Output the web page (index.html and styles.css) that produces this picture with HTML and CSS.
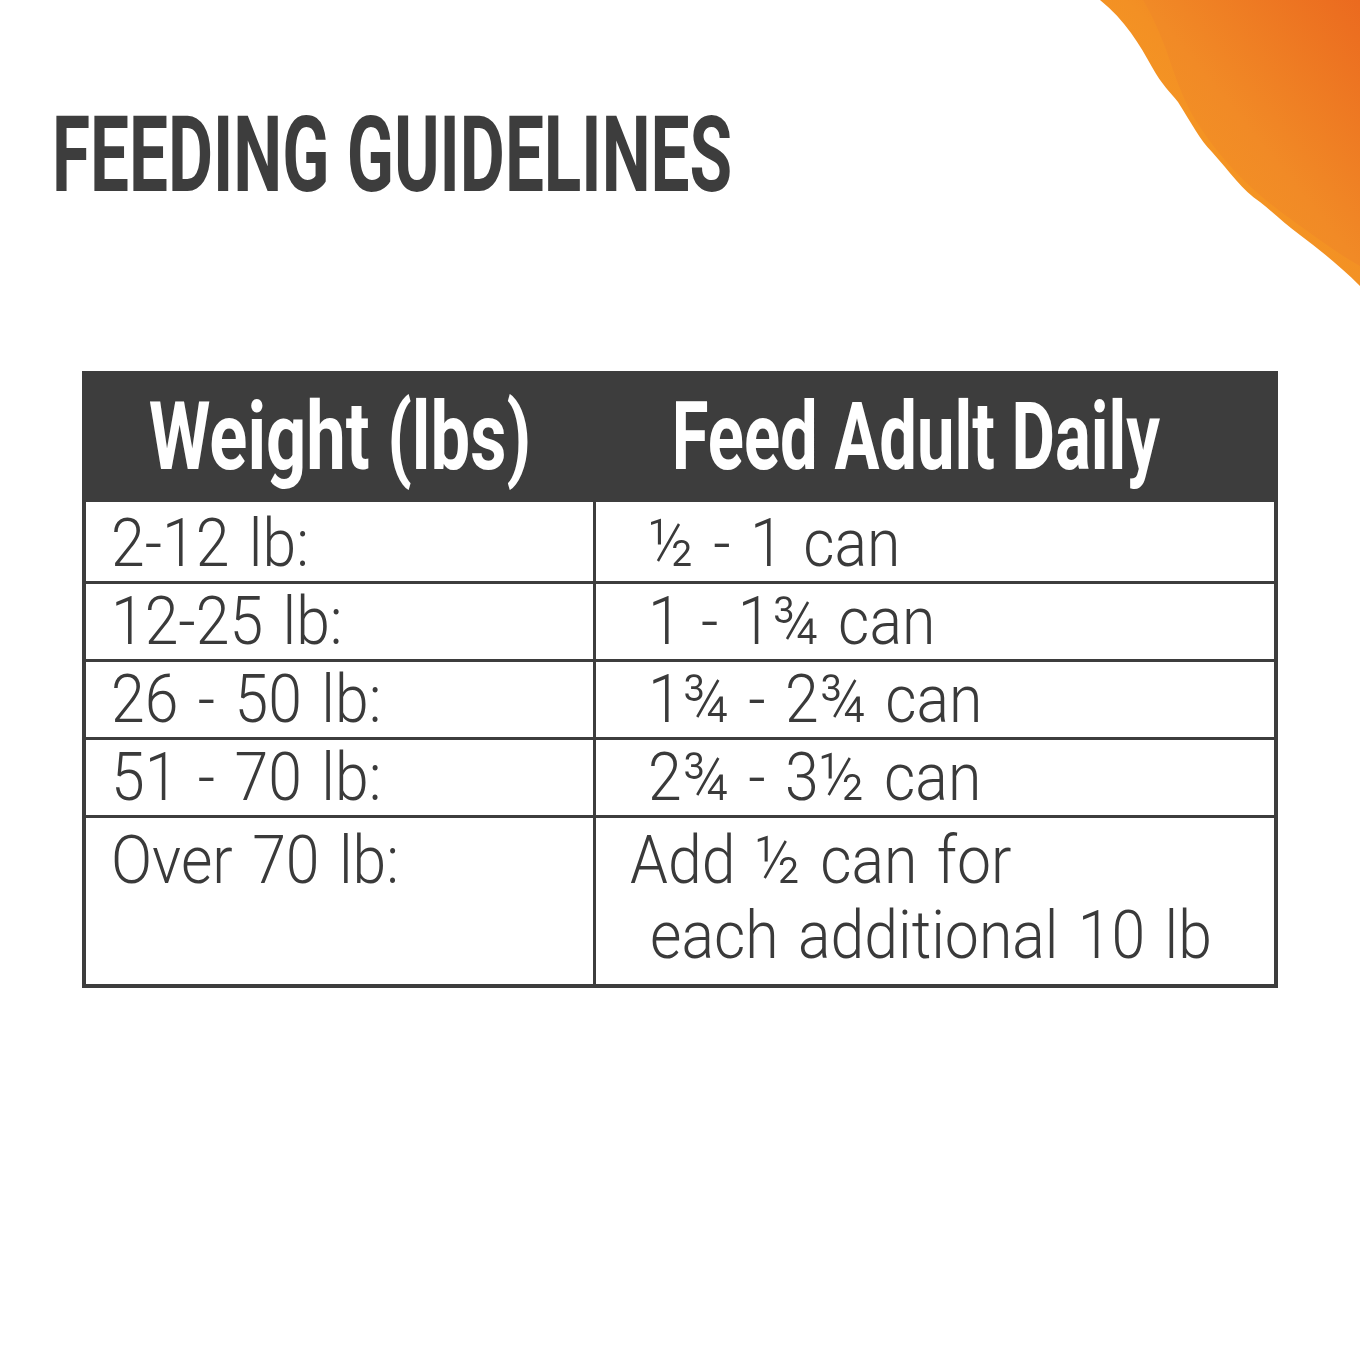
FILE: index.html
```html
<!DOCTYPE html>
<html lang="en">
<head>
<meta charset="utf-8">
<title>Feeding Guidelines</title>
<link rel="stylesheet" href="styles.css">
</head>
<body>
<div class="page">
  <svg class="swoosh" viewBox="0 0 260 290" width="260" height="290" aria-hidden="true">
    <defs>
      <linearGradient id="sw1" x1="0" y1="1" x2="1" y2="0">
        <stop offset="0" stop-color="#f9a41f"/>
        <stop offset="0.55" stop-color="#f39024"/>
        <stop offset="1" stop-color="#ec6d20"/>
      </linearGradient>
      <linearGradient id="sw2" x1="0" y1="1" x2="1" y2="0">
        <stop offset="0" stop-color="#f59a22"/>
        <stop offset="0.5" stop-color="#f18a26"/>
        <stop offset="1" stop-color="#eb6a1f"/>
      </linearGradient>
    </defs>
    <path d="M0,0 C25,20 40,45 52,67 C62,85 70,92 78,102 C92,124 100,140 112,152 C130,172 142,190 160,202 C175,214 185,224 200,235 C220,250 240,266 260,286 L260,0 Z" fill="url(#sw1)"/>
    <path d="M43,0 C55,20 65,45 72,67 C80,90 88,110 100,127 C120,158 150,190 185,215 C210,233 235,252 260,266 L260,0 Z" fill="url(#sw2)"/>
  </svg>

  <h1 class="title"><span class="squeeze">FEEDING GUIDELINES</span></h1>

  <div class="guide">
    <div class="head"><span class="squeeze mid sq-left">Weight (lbs)</span></div>
    <div class="head head-right"><span class="squeeze mid sq-right">Feed Adult Daily</span></div>

    <div class="cell r1"><span class="squeeze">2-12 lb:</span></div>
    <div class="cell r1 amount"><span class="squeeze">½ - 1 can</span></div>

    <div class="cell"><span class="squeeze">12-25 lb:</span></div>
    <div class="cell amount"><span class="squeeze">1 - 1¾ can</span></div>

    <div class="cell"><span class="squeeze">26 - 50 lb:</span></div>
    <div class="cell amount"><span class="squeeze">1¾ - 2¾ can</span></div>

    <div class="cell"><span class="squeeze">51 - 70 lb:</span></div>
    <div class="cell amount"><span class="squeeze">2¾ - 3½ can</span></div>

    <div class="cell last"><span class="squeeze">Over 70 lb:</span></div>
    <div class="cell last amount-wide">
      <span class="squeeze line">Add ½ can for</span>
      <span class="squeeze line indent">each additional 10 lb</span>
    </div>
  </div>
</div>
</body>
</html>
```

FILE: styles.css
```css
html, body {
  margin: 0;
  padding: 0;
  background: #ffffff;
}

.page {
  position: relative;
  width: 1360px;
  height: 1360px;
  overflow: hidden;
  background: #ffffff;
  color: #3a3a3a;
  font-family: Roboto, "Liberation Sans", sans-serif;
}

.swoosh {
  position: absolute;
  top: 0;
  right: 0;
  display: block;
}

.squeeze {
  display: inline-block;
  white-space: nowrap;
  transform-origin: left center;
}

.mid {
  transform-origin: center center;
}

.title {
  margin: 0;
  padding: 96px 0 0 52px;
  font-size: 105px;
  font-weight: 700;
  line-height: 120px;
  height: 120px;
  color: #3d3d3d;
}

.title .squeeze {
  transform: scaleX(0.66);
}

.guide {
  display: grid;
  grid-template-columns: 507px 678px;
  grid-template-rows: 124px 79px 75px 75px 75px 166px;
  column-gap: 3px;
  row-gap: 3px;
  width: 1188px;
  margin: 155px 0 0 82px;
  border: 4px solid #3d3d3d;
  background: #3d3d3d;
}

.head {
  display: flex;
  justify-content: center;
  align-items: center;
  background: #3d3d3d;
  color: #ffffff;
  font-size: 94px;
  font-weight: 700;
  line-height: 124px;
}

.sq-left {
  transform: scaleX(0.75);
}

.sq-right {
  transform: scaleX(0.712);
}

.head-right {
  padding-right: 38px;
}

.cell {
  background: #ffffff;
  font-size: 66px;
  font-weight: 300;
  line-height: 75px;
  padding-left: 25px;
}

.cell .squeeze {
  transform: scaleX(0.92);
  word-spacing: 5px;
}

.r1 {
  padding-top: 4px;
}

.amount {
  padding-left: 52px;
}

.amount-wide {
  padding-left: 34px;
}

.last {
  padding-top: 5px;
}

.line {
  display: block;
  width: max-content;
}

.indent {
  margin-left: 20px;
}
```
